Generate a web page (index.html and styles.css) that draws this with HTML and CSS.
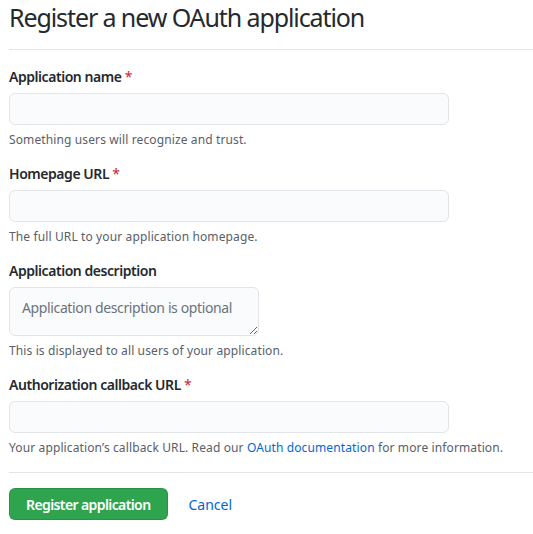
FILE: index.html
```
<!DOCTYPE html>
<html lang="en">
<head>
<meta charset="utf-8">
<title>Register a new OAuth application</title>
<link rel="stylesheet" href="styles.css">
</head>
<body>
<div class="page">
  <div class="subhead">
    <h2 class="subhead-heading">Register a new OAuth application</h2>
  </div>
  <form class="form">
    <div class="form-group">
      <label class="label">Application name <span class="req">*</span></label>
      <input class="input" type="text">
      <p class="note">Something users will recognize and trust.</p>
    </div>
    <div class="form-group">
      <label class="label">Homepage URL <span class="req">*</span></label>
      <input class="input" type="text">
      <p class="note">The full URL to your application homepage.</p>
    </div>
    <div class="form-group">
      <label class="label">Application description</label>
      <textarea class="textarea" placeholder="Application description is optional"></textarea>
      <p class="note">This is displayed to all users of your application.</p>
    </div>
    <div class="form-group">
      <label class="label">Authorization callback URL <span class="req">*</span></label>
      <input class="input" type="text">
      <p class="note">Your application’s callback URL. Read our <a class="link" href="#">OAuth documentation</a> for more information.</p>
    </div>
    <div class="actions">
      <button class="btn-primary" type="button">Register application</button>
      <a class="btn-link" href="#">Cancel</a>
    </div>
  </form>
</div>
</body>
</html>
```
FILE: styles.css
```
* { box-sizing: border-box; }
html, body { margin: 0; padding: 0; background: #fff; }
body {
  font-family: "Noto Sans", "Liberation Sans", sans-serif;
  color: #24292e;
  font-size: 14px;
  line-height: 1.5;
}
.page { padding-left: 9px; }
.subhead {
  border-bottom: 1px solid #e1e4e8;
  padding-bottom: 15px;
}
.subhead-heading {
  margin: 0;
  font-size: 25px;
  font-weight: 400;
  line-height: 34px;
  letter-spacing: -1.1px;
}
.form { margin: 0; }
.form-group { margin: 14px 0; }
.form-group:first-child { margin-top: 16px; }
.label {
  display: block;
  font-weight: 600;
  letter-spacing: -0.45px;
  margin-bottom: 6px;
}
.req { color: #cb2431; font-weight: 400; }
.input, .textarea {
  display: block;
  width: 440px;
  height: 32px;
  background: #fafbfc;
  border: 1px solid #e1e4e8;
  border-radius: 6px;
  font: inherit;
  padding: 5px 12px;
  outline: none;
}
.textarea {
  width: 250px;
  height: 49px;
  padding: 10px 12px;
  resize: both;
  line-height: 20px;
  letter-spacing: -0.37px;
}
.textarea::placeholder { color: #6a737d; }
.note {
  margin: 6px 0 0;
  font-size: 12px;
  line-height: 18px;
  letter-spacing: 0.12px;
  color: #586069;
}
.link, .btn-link { color: #0366d6; text-decoration: none; }
.actions {
  border-top: 1px solid #e1e4e8;
  margin-top: 15px;
  padding-top: 15px;
  display: flex;
  align-items: center;
  gap: 21px;
}
.btn-primary {
  height: 32px;
  padding: 0 16px;
  white-space: nowrap;
  background: #2ea44f;
  border: 1px solid rgba(27,31,35,0.15);
  border-radius: 6px;
  color: #fff;
  font: inherit;
  font-weight: 600;
  letter-spacing: -0.6px;
}
.btn-link { font-size: 14px; }
```
